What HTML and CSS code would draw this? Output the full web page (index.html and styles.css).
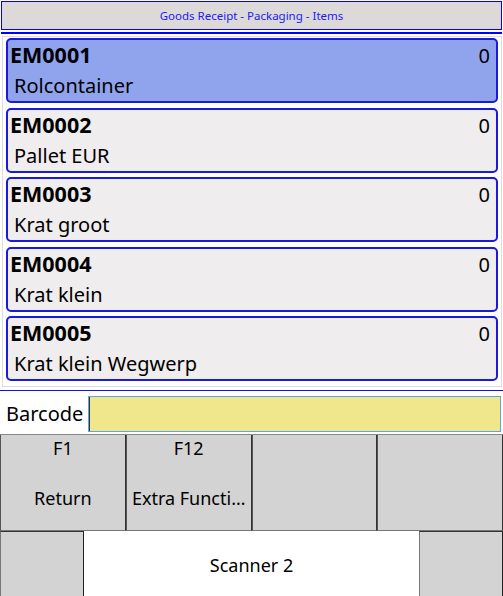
FILE: index.html
```html
<!DOCTYPE html>
<html lang="en">
<head>
  <meta charset="utf-8" />
  <title>Goods Receipt - Packaging - Items</title>
  <meta name="viewport" content="width=device-width, initial-scale=1" />
  <link rel="stylesheet" href="styles.css">
</head>
<body>
  <div class="screen">
    <div class="title">Goods Receipt - Packaging - Items</div>
    <div class="title-rule"></div>

    <div class="items">
      <div class="item selected">
        <div class="item-top"><span class="code">EM0001</span><span class="qty">0</span></div>
        <div class="name">Rolcontainer</div>
      </div>
      <div class="item">
        <div class="item-top"><span class="code">EM0002</span><span class="qty">0</span></div>
        <div class="name">Pallet EUR</div>
      </div>
      <div class="item">
        <div class="item-top"><span class="code">EM0003</span><span class="qty">0</span></div>
        <div class="name">Krat groot</div>
      </div>
      <div class="item">
        <div class="item-top"><span class="code">EM0004</span><span class="qty">0</span></div>
        <div class="name">Krat klein</div>
      </div>
      <div class="item">
        <div class="item-top"><span class="code">EM0005</span><span class="qty">0</span></div>
        <div class="name">Krat klein Wegwerp</div>
      </div>
    </div>

    <div class="scan-row">
      <label for="barcode">Barcode</label>
      <input type="text" id="barcode" class="barcode">
    </div>

    <div class="fkeys">
      <div class="fkey"><span class="fkey-num">F1</span><span class="fkey-label">Return</span></div>
      <div class="fkey"><span class="fkey-num">F12</span><span class="fkey-label">Extra Functi…</span></div>
      <div class="fkey"></div>
      <div class="fkey"></div>
    </div>

    <div class="bottom-bar">
      <div class="side-btn"></div>
      <div class="scanner">Scanner 2</div>
      <div class="side-btn"></div>
    </div>
  </div>
</body>
</html>
```

FILE: styles.css
```css
body {
  margin: 0;
  padding: 0;
  font-family: "Noto Sans", "DejaVu Sans", sans-serif;
  color: #000;
  background-color: #fff;
}

.screen {
  width: 503px;
  height: 596px;
  overflow: hidden;
}

.title {
  margin: 1px 1px 0;
  height: 29px;
  box-sizing: border-box;
  border: 1px solid #0000ff;
  background-color: #dcd9d8;
  color: #1a1aff;
  font-size: 11.5px;
  display: flex;
  align-items: center;
  justify-content: center;
}

.title-rule {
  margin: 2px 1px 0;
  height: 2px;
  background-color: #0000ff;
}

.items {
  margin: 2px 1px 0 2px;
  border: 1px solid #dddddd;
  padding: 1px 3px 5px;
  display: flex;
  flex-direction: column;
  gap: 4.5px;
}

.item {
  height: 65px;
  box-sizing: border-box;
  border: 2px solid #1a1ade;
  border-radius: 5px;
  background-color: #efedee;
  padding: 1px 6px 0 2px;
}

.item.selected {
  background-color: #90a4ee;
}

.item-top {
  display: flex;
  justify-content: space-between;
  align-items: baseline;
  font-size: 20px;
  line-height: 28px;
}

.code {
  font-weight: bold;
  font-size: 21.5px;
}

.name {
  margin-top: 2px;
  padding-left: 4px;
  font-size: 20px;
  line-height: 28px;
}

.scan-row {
  margin-top: 3px;
  border-top: 1px solid #1010f0;
  height: 44px;
  box-sizing: border-box;
  display: flex;
  align-items: flex-start;
  padding: 5px 2px 0 6px;
  gap: 5px;
}

.scan-row label {
  font-size: 20px;
  line-height: 36px;
}

.barcode {
  flex: 1;
  height: 36px;
  box-sizing: border-box;
  margin: 0;
  border: 1px solid #5fa3e6;
  background-color: #f0e68c;
  box-shadow: inset 1px 0 0 #333;
  outline: none;
  font: inherit;
}

.fkeys {
  display: grid;
  grid-template-columns: repeat(4, 1fr);
  height: 97px;
  border-top: 1px solid #888;
  box-sizing: border-box;
}

.fkey {
  background-color: #d3d3d3;
  border-left: 1px solid #555;
  border-right: 1px solid #333;
  border-bottom: 1px solid #777;
  display: flex;
  flex-direction: column;
  align-items: center;
  font-size: 18px;
  line-height: 24.5px;
  padding-top: 1px;
  min-width: 0;
}

.fkey-label {
  margin-top: 25px;
  white-space: nowrap;
}

.bottom-bar {
  display: flex;
  height: 65px;
}

.side-btn {
  width: 84px;
  box-sizing: border-box;
  background-color: #d3d3d3;
  border-top: 1px solid #333;
  border-left: 1px solid #777;
  border-right: 1px solid #222;
}

.scanner {
  flex: 1;
  display: flex;
  align-items: center;
  justify-content: center;
  font-size: 18px;
  padding-top: 3px;
}
```
